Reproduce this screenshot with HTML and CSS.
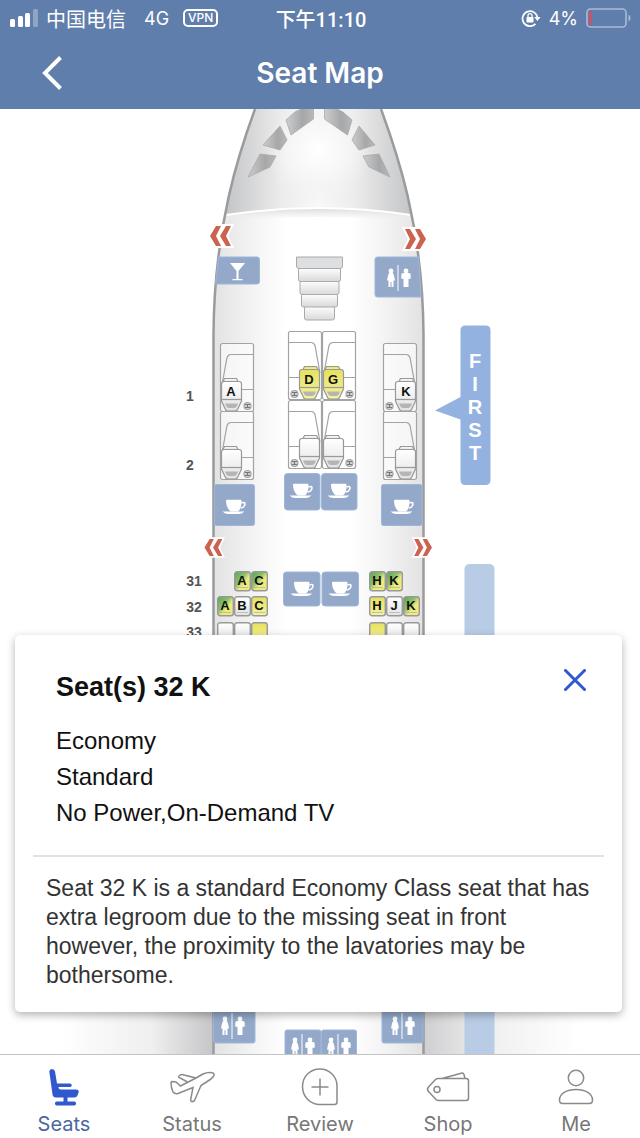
FILE: index.html
```html
<!DOCTYPE html>
<html lang="en">
  <head>
    <meta charset="UTF-8" />
    <meta name="viewport" content="width=device-width, initial-scale=1.0" />
    <title>Seat Map</title>
    <link rel="stylesheet" href="styles.css">
  </head>
  <body>
    <header class="header">
      <div class="status-bar">
        <div class="status-left">
          <svg class="signal" viewBox="0 0 28 18" aria-hidden="true">
            <rect x="0" y="10" width="5" height="8" rx="1.5" />
            <rect x="8" y="7" width="5" height="11" rx="1.5" />
            <rect x="15" y="4" width="5" height="14" rx="1.5" />
            <rect x="23" y="0" width="5" height="18" rx="1.5" opacity="0.3" />
          </svg>
          <span class="carrier" lang="zh">中国电信</span>
          <span class="network">4G</span>
          <span class="vpn">VPN</span>
        </div>
        <div class="clock" lang="zh">下午11:10</div>
        <div class="status-right">
          <svg class="lock" viewBox="0 0 20 18" aria-hidden="true">
            <path d="M14.5 14.8A7.5 7.5 0 1 1 16.5 9" fill="none" stroke="#fff" stroke-width="1.7" />
            <path d="M13.2 8h6.4l-3.2 4z" />
            <rect x="5.5" y="8" width="7" height="5.5" rx="0.8" />
            <path d="M7 8.5V6.6a2 2 0 0 1 4 0v1.9" fill="none" stroke="#fff" stroke-width="1.3" />
          </svg>
          <span>4%</span>
          <svg class="battery" viewBox="0 0 46 20" aria-hidden="true">
            <rect x="1" y="1" width="39" height="18" rx="3.5" fill="none" stroke="#a9bbd8" stroke-width="1.6" />
            <rect x="3" y="3" width="3" height="14" rx="1" fill="#c4566b" />
            <path d="M42.5 6.5a4 4 0 0 1 0 7z" fill="#a9bbd8" />
          </svg>
        </div>
      </div>
      <div class="title-bar">
        <button class="back" type="button" aria-label="Back">
          <svg viewBox="0 0 20 34" aria-hidden="true"><path d="M18.5 1.5L3 17l15.5 15.5" /></svg>
        </button>
        <h1>Seat Map</h1>
      </div>
    </header>

    <main class="map">
      <svg class="plane" viewBox="0 109 640 945" role="group" aria-label="Cabin layout">
        <defs>
          <linearGradient id="cabin">
            <stop offset="0" stop-color="#e2e2e3" />
            <stop offset="0.18" stop-color="#f3f3f3" />
            <stop offset="0.35" stop-color="#fff" />
            <stop offset="0.65" stop-color="#fff" />
            <stop offset="0.82" stop-color="#f3f3f3" />
            <stop offset="1" stop-color="#e2e2e3" />
          </linearGradient>
          <linearGradient id="nose">
            <stop offset="0" stop-color="#c4c5c7" />
            <stop offset="0.3" stop-color="#ececec" />
            <stop offset="0.5" stop-color="#f8f8f8" />
            <stop offset="0.7" stop-color="#ececec" />
            <stop offset="1" stop-color="#c4c5c7" />
          </linearGradient>
          <radialGradient id="dome">
            <stop offset="0" stop-color="#fff" />
            <stop offset="0.6" stop-color="#f5f5f5" />
            <stop offset="1" stop-color="#f0f0f0" stop-opacity="0" />
          </radialGradient>
          <linearGradient id="glass">
            <stop offset="0" stop-color="#cdcdcd" />
            <stop offset="0.6" stop-color="#a6a7a9" />
            <stop offset="1" stop-color="#b8b8b8" />
          </linearGradient>
          <linearGradient id="shade" x2="0" y2="1">
            <stop offset="0" stop-color="#d9d9d9" />
            <stop offset="1" stop-color="#f7f7f7" stop-opacity="0" />
          </linearGradient>
          <linearGradient id="step" x2="0" y2="1">
            <stop offset="0" stop-color="#fff" />
            <stop offset="1" stop-color="#d9d9da" />
          </linearGradient>
          <linearGradient id="cushion" x2="0" y2="1">
            <stop offset="0" stop-color="#fff" />
            <stop offset="1" stop-color="#e2e2e3" />
          </linearGradient>
          <linearGradient id="yellow" x2="0" y2="1">
            <stop offset="0" stop-color="#e6e15e" />
            <stop offset="1" stop-color="#f5f2a0" />
          </linearGradient>
          <linearGradient id="mixed" y2="1">
            <stop offset="0.1" stop-color="#62ad5c" />
            <stop offset="0.4" stop-color="#8fc168" />
            <stop offset="0.6" stop-color="#eeea7c" />
          </linearGradient>
          <linearGradient id="wing-left">
            <stop offset="0" stop-color="#fff" />
            <stop offset="0.6" stop-color="#efeff0" />
            <stop offset="1" stop-color="#c6c6c8" />
          </linearGradient>
          <linearGradient id="wing-right">
            <stop offset="0" stop-color="#cfcfd1" />
            <stop offset="0.4" stop-color="#efeff0" />
            <stop offset="1" stop-color="#fff" />
          </linearGradient>

          <g id="exit">
            <path d="M0 10L6 0h15l-5 10 5 10H6z" fill="#fff" stroke="#fff" stroke-width="4" />
            <path d="M0 10L6 0h5L6 10l5 10H6zM10 10l6-10h5l-5 10 5 10h-5z" fill="#cb6350" />
          </g>
          <g id="cup" fill="#fff">
            <path d="M-8-6.5q0-.8 1-.8H6.500q1 0 1 .8Q8 1 4 4.500H-3Q-8 1-8-6.500z" />
            <path d="M7.500-4q3.500-1.500 3.500 1Q10.500.5 6.500 1" fill="none" stroke="#fff" stroke-width="1.600" />
            <path d="M-11.500 4.500H10.500Q7.500 7 4.500 7H-5.500Q-9 7-11.500 4.500z" />
          </g>
          <g id="lavatory" fill="#fff">
            <circle cx="-7" cy="-7" r="2.4" />
            <path d="M-9-5h4q1.500 3 2 7.500h-1.500V9h-2V4h-1v5h-2V2.500H-11Q-10.500-2-9-5z" />
            <path d="M-.7-13H.7v26H-.7z" opacity="0.7" />
            <circle cx="8" cy="-7" r="2.4" />
            <path d="M5-5h6q1.700 0 1.700 1.700v4H10.500V9h-5V.7H3.300v-4Q3.300-5 5-5z" />
          </g>
          <g id="suite" stroke="#a2a3a5" stroke-width="1.2">
            <rect x="0.5" y="0.5" width="33" height="68" rx="2" fill="#fff" fill-opacity="0.6" />
            <path d="M33 11.500H11q-3 0-4 3L2 42M22 46.500h11" fill="none" />
            <circle cx="27.5" cy="63" r="3.5" fill="#d5d5d5" />
            <path d="M25 61.500h5M25 64.500h5M27.500 61v4" stroke="#77787a" />
          </g>
          <g id="recliner" stroke="#98999b" stroke-width="1.2">
            <path d="M3 38.500l1.500-3h12l1.500 3z" />
            <path d="M1.500 41q0-2.500 2.500-2.500h15q2.500 0 2.500 2.500v17L17.500 66.500Q17 68 15 68H8Q6 68 5.500 66.500L1.500 58z" />
            <path d="M1.500 56.500h20" />
            <path d="M5 60.500h13q-1.500 4.500-4 4.500H9q-2.500 0-4-4.500z" fill="#b5b5b5" stroke="none" />
          </g>
          <g id="seat">
            <rect x="0.7" y="0.7" width="15.600" height="19" rx="2.5" stroke="#98999b" stroke-width="1.4" />
            <path d="M3 16.500h11" stroke="#b5b5a8" stroke-width="0.8" />
          </g>
        </defs>

        <!-- wings -->
        <path d="M60 990H213V1054H60z" fill="url(#wing-left)" />
        <path d="M424 990H580V1054H424z" fill="url(#wing-right)" />

        <!-- fuselage -->
        <path d="M255 109C240 150 214 225 213.500 335V1054H423.500V335C423 225 396 150 381 109z" fill="url(#cabin)" />
        <path d="M255 109Q235 160 226 215Q318 201 411 215Q401 160 381 109z" fill="url(#nose)" />
        <ellipse cx="318" cy="150" rx="52" ry="54" fill="url(#dome)" />
        <path d="M226 215Q318 201 411 215V222Q318 212 226 222z" fill="url(#shade)" />
        <path d="M226 215Q318 201 411 215" fill="none" stroke="#fff" stroke-width="2" />
        <g fill="url(#glass)" stroke="#a9a9ab" stroke-width="0.8">
          <path d="M286 120l9-8 8-4h10.500v11L291 135z" />
          <path d="M280 126l7 14-7 10-17-5z" />
          <path d="M260 154l16 2-6 11-22 10z" />
          <path d="M352 120l-9-8-8-4h-10.500v11L347.500 135z" />
          <path d="M359 126l-7 14 7 10 16-5z" />
          <path d="M379 154l-16 2 6 11 21 10z" />
        </g>
        <path d="M255 109C240 150 214 225 213.500 335V1054M423.500 1054V335C423 225 396 150 381 109" fill="none" stroke="#9a9b9d" stroke-width="2.5" />

        <use href="#exit" x="210" y="226" />
        <use href="#exit" transform="translate(426 229) scale(-1 1)" />
        <use href="#exit" transform="translate(204.5 539) scale(0.85)" />
        <use href="#exit" transform="translate(432 539) scale(-0.85 0.85)" />

        <!-- galleys, bar and lavatories -->
        <g fill="#94a9ca" stroke="#9db7da" stroke-width="1">
          <path d="M218.500 257H257q2.500 0 2.500 2.500V281.500q0 2.500-2.500 2.500H215.500z" />
          <path d="M377.500 257H418.500L421 297H377.500q-2.500 0-2.500-2.500V259.500q0-2.500 2.500-2.500z" />
          <rect x="214.5" y="484.5" width="40" height="41" rx="2" />
          <rect x="381.5" y="484.5" width="40.5" height="41" rx="2" />
          <rect x="284.5" y="473.5" width="35.5" height="36.5" rx="3" />
          <rect x="321.5" y="473.5" width="35.5" height="36.5" rx="3" />
          <rect x="283.5" y="572" width="36.5" height="34" rx="3" />
          <rect x="322" y="572" width="36.5" height="34" rx="3" />
          <rect x="213.5" y="1000" width="41.5" height="43" rx="2" />
          <rect x="382" y="1000" width="41" height="43" rx="2" />
          <rect x="285" y="1030" width="36" height="40" rx="2" />
          <rect x="321.5" y="1030" width="35" height="40" rx="2" />
        </g>
        <path d="M230 263h15l-6.500 8v8h4v1.200h-10V279h4v-8z" fill="#fff" />
        <use href="#lavatory" x="398" y="278" />
        <use href="#cup" x="234" y="507" />
        <use href="#cup" x="402" y="507" />
        <use href="#cup" x="301" y="491" />
        <use href="#cup" x="339" y="491" />
        <use href="#cup" x="302" y="589" />
        <use href="#cup" x="340" y="589" />
        <use href="#lavatory" x="232" y="1026" />
        <use href="#lavatory" x="402" y="1026" />
        <use href="#lavatory" x="302" y="1047" />
        <use href="#lavatory" x="338" y="1047" />

        <!-- stairs -->
        <g fill="url(#step)" stroke="#a9aaac" stroke-width="1">
          <rect x="304.5" y="306" width="30" height="14" rx="2" />
          <rect x="301.5" y="294" width="36" height="13" rx="2" />
          <rect x="300" y="281" width="39" height="13.5" rx="2" />
          <rect x="298.5" y="268" width="42" height="13.5" rx="2" />
          <path d="M296.500 257h46v9q0 2.500-2.500 2.500h-41q-2.500 0-2.500-2.500z" fill="#dedfe1" />
        </g>

        <!-- first class -->
        <g>
          <use href="#suite" x="220" y="343" />
          <use href="#suite" x="220" y="411" />
          <use href="#suite" x="322" y="331" />
          <use href="#suite" x="322" y="400" />
          <use href="#suite" transform="translate(322 0) scale(-1 1)" y="331" />
          <use href="#suite" transform="translate(322 0) scale(-1 1)" y="400" />
          <use href="#suite" transform="translate(417 0) scale(-1 1)" y="343" />
          <use href="#suite" transform="translate(417 0) scale(-1 1)" y="411" />
        </g>
        <g fill="url(#cushion)">
          <use href="#recliner" x="220" y="411" />
          <use href="#recliner" x="322" y="400" />
          <use href="#recliner" transform="translate(321 0) scale(-1 1)" y="400" />
          <use href="#recliner" transform="translate(417 0) scale(-1 1)" y="411" />
        </g>
        <g class="seat-label">
          <a href="#1A" fill="url(#cushion)"><use href="#recliner" x="220" y="343" /><text x="231" y="396">A</text></a>
          <a href="#1D" fill="url(#yellow)"><use href="#recliner" transform="translate(321 0) scale(-1 1)" y="331" /><text x="309" y="384">D</text></a>
          <a href="#1G" fill="url(#yellow)"><use href="#recliner" x="322" y="331" /><text x="333" y="384">G</text></a>
          <a href="#1K" fill="url(#cushion)"><use href="#recliner" transform="translate(417 0) scale(-1 1)" y="343" /><text x="406" y="396">K</text></a>
        </g>

        <!-- economy -->
        <g class="seat-label">
          <a href="#31A" fill="url(#mixed)"><use href="#seat" x="234" y="571" /><text x="242" y="585">A</text></a>
          <a href="#31C" fill="url(#mixed)"><use href="#seat" x="251" y="571" /><text x="259" y="585">C</text></a>
          <a href="#31H" fill="url(#mixed)"><use href="#seat" x="369" y="571" /><text x="377" y="585">H</text></a>
          <a href="#31K" fill="url(#mixed)"><use href="#seat" x="386" y="571" /><text x="394" y="585">K</text></a>
          <a href="#32A" fill="url(#mixed)"><use href="#seat" x="217" y="596" /><text x="225" y="610">A</text></a>
          <a href="#32B" fill="url(#cushion)"><use href="#seat" x="234" y="596" /><text x="242" y="610">B</text></a>
          <a href="#32C" fill="url(#yellow)"><use href="#seat" x="251" y="596" /><text x="259" y="610">C</text></a>
          <a href="#32H" fill="url(#yellow)"><use href="#seat" x="369" y="596" /><text x="377" y="610">H</text></a>
          <a href="#32J" fill="url(#cushion)"><use href="#seat" x="386" y="596" /><text x="394" y="610">J</text></a>
          <a href="#32K" fill="url(#mixed)"><use href="#seat" x="403" y="596" /><text x="411" y="610">K</text></a>
        </g>
        <g fill="url(#cushion)">
          <use href="#seat" x="217" y="622" />
          <use href="#seat" x="234" y="622" />
          <use href="#seat" x="251" y="622" fill="url(#yellow)" />
          <use href="#seat" x="369" y="622" fill="url(#yellow)" />
          <use href="#seat" x="386" y="622" />
          <use href="#seat" x="403" y="622" />
        </g>

        <g class="row-number">
          <text x="190" y="401">1</text>
          <text x="190" y="470">2</text>
          <text x="194" y="586">31</text>
          <text x="194" y="612">32</text>
          <text x="194" y="637">33</text>
        </g>

        <!-- cabin class markers -->
        <path d="M465.500 325.500h20q5 0 5 5V480q0 5-5 5h-20q-5 0-5-5V419.500L435 410.500l25.500-13.500V330.500q0-5 5-5z" fill="#93b2e0" />
        <g class="class-label">
          <text x="475" y="368">F</text>
          <text x="475" y="391">I</text>
          <text x="475" y="414">R</text>
          <text x="475" y="437">S</text>
          <text x="475" y="460">T</text>
        </g>
        <rect x="464.5" y="564" width="30" height="500" rx="5" fill="#b8cce5" />
      </svg>

      <section class="seat-card" aria-labelledby="seat-title">
        <button class="close" type="button" aria-label="Close">
          <svg viewBox="0 0 22 22" aria-hidden="true"><path d="M1.500 1.500l19 19M20.500 1.500l-19 19" /></svg>
        </button>
        <div class="seat-summary">
          <h2 id="seat-title">Seat(s) 32 K</h2>
          <p>Economy</p>
          <p>Standard</p>
          <p>No Power,On-Demand TV</p>
        </div>
        <p class="seat-note">Seat 32 K is a standard Economy Class seat that has extra legroom due to the missing seat in front however, the proximity to the lavatories may be bothersome.</p>
      </section>
    </main>

    <nav class="tabs">
      <a class="tab active" href="#seats" aria-current="page">
        <svg viewBox="0 0 40 40" aria-hidden="true">
          <path d="M5.300 3.500Q5.500 1 8 1t3 2.500l2 12H26a1.700 1.700 0 0 1 0 3.500H14.500q0 2.500 2.500 2.500H32q3 0 2.700 2.500l-1 3q-1 2.500-3.500 2.500H12q-3 0-3.500-3z" />
          <path d="M19.500 29h4v5h-4z" />
          <rect x="11" y="33.5" width="21" height="4" rx="1.7" />
        </svg>
        <span>Seats</span>
      </a>
      <a class="tab" href="#status">
        <svg class="wide" viewBox="0 0 46 40" aria-hidden="true">
          <path d="M2 14.500q0-1 1.500-1l3.500.5 4.500 4L27 10l7-4q3-1.500 7-1.500 4.500 0 4 2.500-.5 2.500-6 6l-7 4.500-6.500 15q-1 1.500-3 1-1-.5-.8-2L24 19.500 9 25.500q-3 1-5-1.500Q2 20 2 14.500z" />
          <path d="M18.500 14L10 9.500q-1-1 .5-2 2-1.500 4.500-.5L27 10" />
        </svg>
        <span>Status</span>
      </a>
      <a class="tab" href="#review">
        <svg viewBox="0 0 40 40" aria-hidden="true">
          <path d="M20 1C29.500 1 37 8.500 37 18V34q0 2.500-2.500 2.500H20C10 36.500 2.500 28.500 2.500 18.500S10 1 20 1zM20 10.500v17M11.500 19h17" />
        </svg>
        <span>Review</span>
      </a>
      <a class="tab" href="#shop">
        <svg class="wide" viewBox="0 0 46 40" aria-hidden="true">
          <path d="M13 10.500H41q2.500 0 2.500 2.500V30q0 2.500-2.500 2.500H14q-2 0-3-1L3.500 23.500q-2-2 0-4.500l7-7.500q1-1 2.500-1zM17 10.500L37 5q1.500 0 2 1.500l1 4" />
          <circle cx="12" cy="21.5" r="3" />
        </svg>
        <span>Shop</span>
      </a>
      <a class="tab" href="#me">
        <svg viewBox="0 0 40 40" aria-hidden="true">
          <circle cx="20" cy="10" r="7.700" />
          <path d="M3.500 32c0-6.500 7-10.500 16.500-10.500s16.500 4 16.500 10.500q0 3.500-3 3.500h-27q-3 0-3-3.500z" />
        </svg>
        <span>Me</span>
      </a>
    </nav>
  </body>
</html>
```

FILE: styles.css
```css
* {
  box-sizing: border-box;
}

body {
  display: flex;
  flex-direction: column;
  height: 100vh;
  margin: 0;
  background-color: #fff;
  font-family: "Liberation Sans", Arial, sans-serif;
  color: #111;
}

h1,
h2,
p {
  margin: 0;
}

button {
  padding: 0;
  border: none;
  background: none;
  cursor: pointer;
}

/* header */
.header {
  background-color: #5f7eab;
  color: #fff;
  font-family: Inter, "Noto Sans CJK SC", sans-serif;
}

.status-bar {
  display: grid;
  grid-template-columns: 1fr auto 1fr;
  align-items: center;
  height: 36px;
  padding: 0 8px 0 10px;
  font-size: 18px;
}

.status-bar svg {
  fill: #fff;
}

.status-left,
.status-right {
  display: flex;
  align-items: center;
  gap: 8px;
}

.status-right {
  justify-content: flex-end;
}

.signal {
  width: 28px;
  height: 18px;
}

.carrier {
  font-family: "Noto Sans CJK SC", sans-serif;
  font-size: 20px;
}

.network {
  margin: 0 6px 0 10px;
}

.vpn {
  padding: 0 3px;
  border: 2px solid #fff;
  border-radius: 5px;
  font-size: 12px;
  font-weight: 500;
  line-height: 14px;
}

.clock {
  font-family: Roboto, "Noto Sans CJK SC", sans-serif;
  font-size: 20px;
  font-weight: 500;
}

.lock {
  width: 20px;
  height: 18px;
}

.battery {
  width: 46px;
  height: 20px;
}

.title-bar {
  display: grid;
  grid-template-columns: 64px 1fr 64px;
  align-items: center;
  height: 73px;
  padding: 0 20px;
}

.back svg {
  display: block;
  width: 20px;
  height: 34px;
  margin: 0 auto;
  fill: none;
  stroke: #fff;
  stroke-width: 4;
}

.title-bar h1 {
  font-size: 28px;
  font-weight: 600;
  text-align: center;
}

/* seat map */
.map {
  position: relative;
  flex: 1;
  min-height: 0;
  overflow: hidden;
}

.plane {
  display: block;
  width: 100%;
}

.seat-label text {
  fill: #111;
  font-size: 13px;
  font-weight: bold;
  text-anchor: middle;
}

.row-number text {
  fill: #555;
  font-size: 14px;
  font-weight: bold;
  text-anchor: middle;
}

.class-label text {
  fill: #fff;
  font-size: 20px;
  font-weight: bold;
  text-anchor: middle;
}

/* seat details, over the map */
.seat-card {
  position: absolute;
  right: 18px;
  bottom: 42px;
  left: 15px;
  padding: 34px 18px 22px;
  border-radius: 5px;
  background-color: #fff;
  box-shadow: 0 3px 8px rgba(0, 0, 0, 0.3);
}

.close {
  position: absolute;
  top: 34px;
  right: 36px;
}

.close svg {
  display: block;
  width: 22px;
  height: 22px;
  stroke: #3159ce;
  stroke-width: 3;
  stroke-linecap: round;
}

.seat-summary {
  padding: 0 23px 24px;
  border-bottom: 2px solid #e2e2e2;
  font-size: 24px;
  line-height: 36px;
}

.seat-summary h2 {
  margin-bottom: 18px;
  font-size: 27px;
  line-height: 36px;
}

.seat-note {
  padding: 17px 8px 0 13px;
  color: #333;
  font-size: 23px;
  line-height: 29px;
}

/* bottom tabs */
.tabs {
  display: grid;
  grid-template-columns: repeat(5, 1fr);
  height: 84px;
  border-top: 1px solid #c4c4c4;
  background-color: #fff;
}

.tab {
  display: flex;
  flex-direction: column;
  align-items: center;
  gap: 4px;
  padding-top: 13px;
  color: #777;
  font-family: Inter, sans-serif;
  font-size: 20px;
  line-height: 24px;
  text-decoration: none;
}

.tab svg {
  width: 40px;
  height: 40px;
  fill: none;
  stroke: #8a8a8a;
  stroke-width: 1.5;
}

.tab .wide {
  width: 46px;
}

.tab.active {
  color: #4a67a1;
}

.tab.active svg {
  fill: #3159ce;
  stroke: none;
}
```
